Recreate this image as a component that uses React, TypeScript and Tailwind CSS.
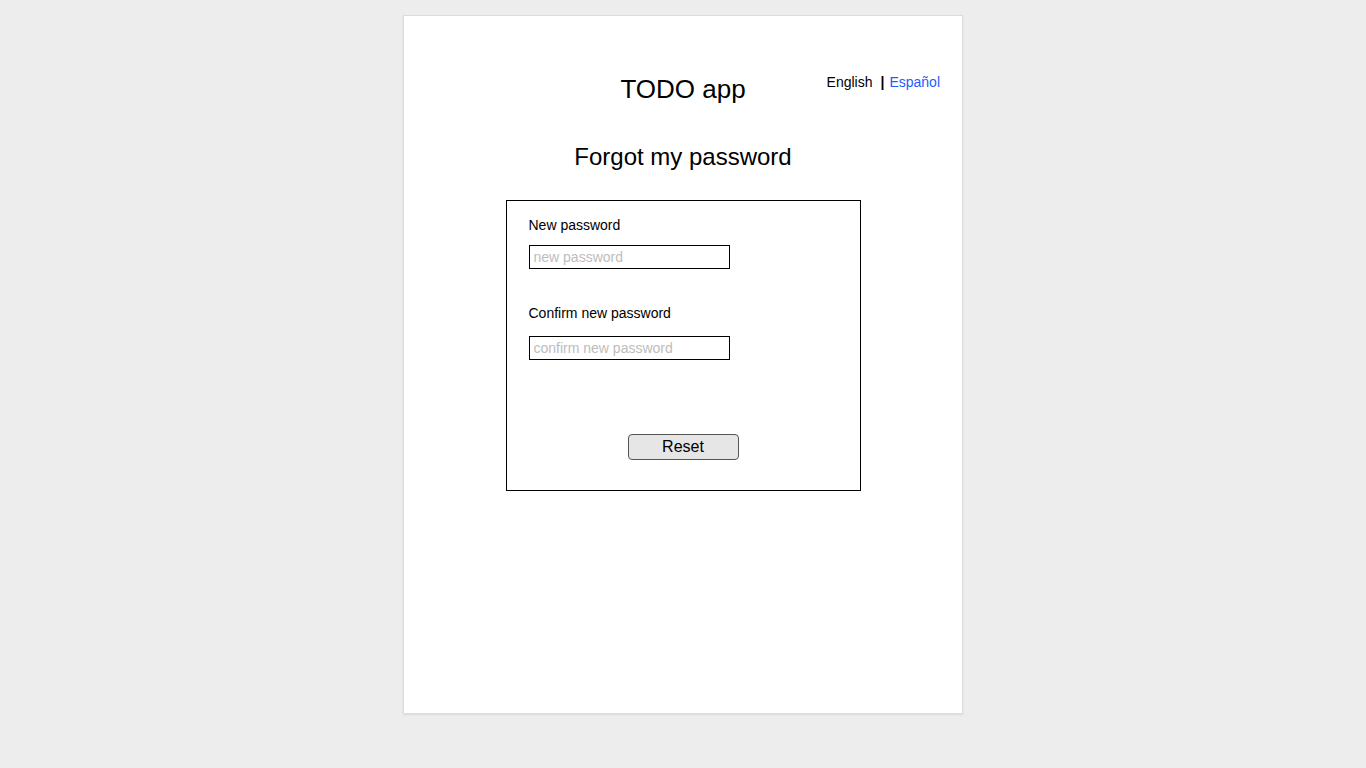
const Field = ({
  label,
  placeholder,
  className,
  inputClass,
}: {
  label: string;
  placeholder: string;
  className?: string;
  inputClass?: string;
}) => (
  <div className={className}>
    <label className="block text-[14px] leading-[16px]">{label}</label>
    <input
      type="password"
      placeholder={placeholder}
      className={`block w-[201px] h-[24px] border border-black px-[4px] text-[14px] outline-none placeholder:text-[#bdbdbd] ${inputClass ?? ""}`}
    />
  </div>
);

const App = () => {
  return (
    <div className="w-screen min-h-[772px] bg-[#ededed] pt-[15px] font-['Liberation_Sans',Arial,sans-serif] text-black">
      <div className="mx-auto w-[560px] h-[699px] bg-white border border-[#dcdcdc] shadow-[0_1px_2px_rgba(0,0,0,0.08)] pt-[58px] px-[22px]">
        <header className="grid grid-cols-[1fr_auto_1fr] items-start">
          <div />
          <h1 className="text-[26px] leading-[30px]">TODO app</h1>
          <div className="flex justify-end text-[14px] leading-[16px]">
            <span>English</span>
            <span className="ml-[8px] font-bold">|</span>
            <a href="#" className="ml-[5px] text-[#1f5bff]">
              Español
            </a>
          </div>
        </header>

        <h2 className="mt-[39px] text-center text-[24px] leading-[28px]">Forgot my password</h2>

        <form className="mx-auto mt-[29px] w-[355px] h-[291px] border border-black pt-[16px] px-[22px]">
          <Field label="New password" placeholder="new password" inputClass="mt-[12px]" />
          <Field
            label="Confirm new password"
            placeholder="confirm new password"
            className="mt-[36px]"
            inputClass="mt-[15px]"
          />
          <div className="mt-[74px] flex justify-center">
            <button
              type="button"
              className="w-[111px] h-[26px] bg-[#e6e6e6] border border-[#555] rounded-[4px] text-[16px] leading-[18px]"
            >
              Reset
            </button>
          </div>
        </form>
      </div>
    </div>
  );
};

export default App;
